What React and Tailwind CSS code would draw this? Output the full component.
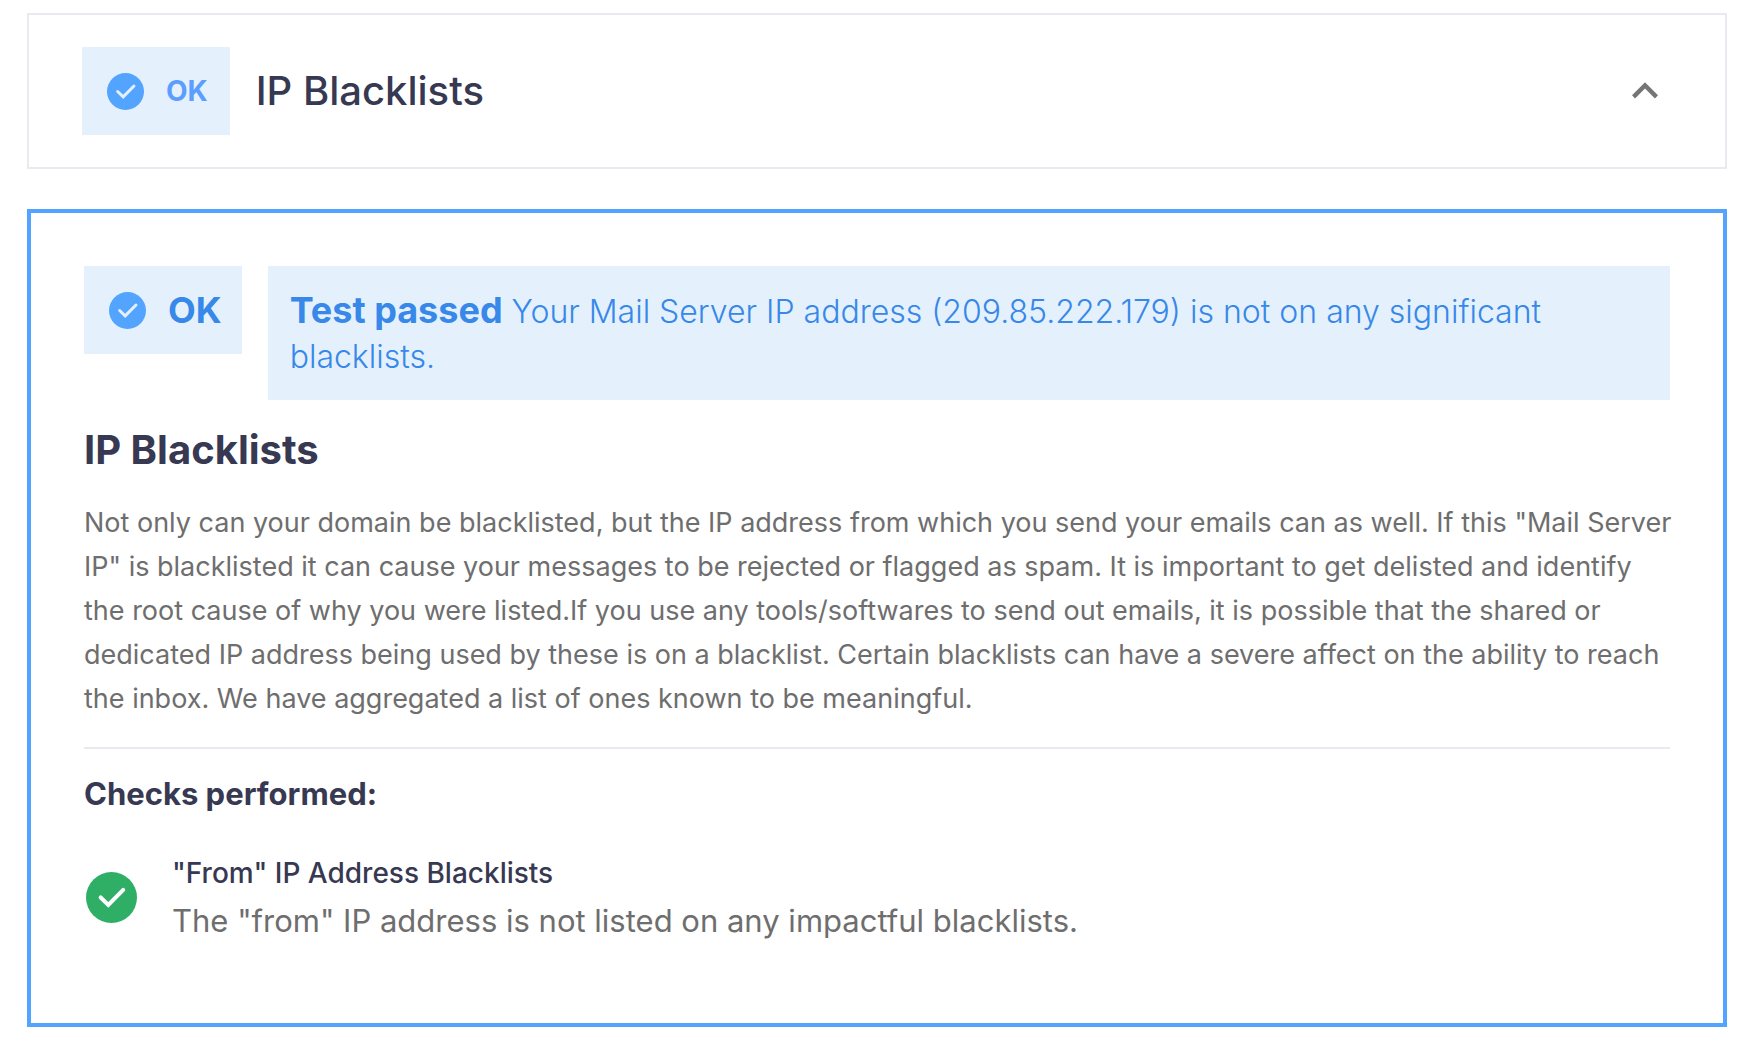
import React, { useState } from "react";

const CheckCircle = ({ className, check }) => (
  <svg viewBox="0 0 24 24" className={className} aria-hidden="true">
    <circle cx="12" cy="12" r="12" fill="currentColor" />
    <path
      d="M6.9 12l3.6 3.5 7-7.1"
      fill="none"
      stroke={check}
      strokeWidth="1.9"
      strokeLinecap="round"
      strokeLinejoin="miter"
    />
  </svg>
);

const checks = [
  {
    title: '"From" IP Address Blacklists',
    text: 'The "from" IP address is not listed on any impactful blacklists.',
  },
];

const App = () => {
  const [open, setOpen] = useState(true);

  return (
    <main className="min-h-screen bg-white pl-[27px] pr-[23px] pt-[13px] pb-4 font-['Inter',sans-serif] [font-optical-sizing:none]">
      {/* Accordion header */}
      <button
        type="button"
        aria-expanded={open}
        onClick={() => setOpen(!open)}
        className="flex w-full cursor-pointer items-center border-2 border-[#e9e9ef] py-8 pl-[53px] pr-[54px] text-left"
      >
        <span className="flex h-[88px] shrink-0 items-center gap-[22px] bg-[#e4f1fd] pl-[25px] pr-[22px] text-[28px] font-bold text-[#5b9eff]">
          <CheckCircle className="size-[37px] text-[#52a4ff]" check="#e4f1fd" />
          OK
        </span>
        <span className="ml-[26px] flex-1 text-[40px] font-medium text-[#373952]">
          IP Blacklists
        </span>
        <svg viewBox="0 0 24 24" className="size-[52px] text-[#757575]" aria-hidden="true">
          <path
            d="M12 8l-6 6 1.41 1.41L12 10.83l4.59 4.58L18 14z"
            fill="currentColor"
          />
        </svg>
      </button>

      {/* Accordion panel */}
      {open && (
        <section className="mt-10 border-4 border-[#52a4ff] px-[53px] pt-[53px] pb-[78px]">
          <div className="flex items-start gap-[26px]">
            <div className="flex h-[88px] shrink-0 items-center gap-[22px] bg-[#e4f1fd] pl-[25px] pr-5 text-[36px] font-bold text-[#3788e8]">
              <CheckCircle className="size-[37px] text-[#52a4ff]" check="#e4f1fd" />
              OK
            </div>
            <p className="flex-1 bg-[#e4f1fd] px-[22px] pt-[23px] pb-[21px] text-[32px] leading-[45px] font-light text-[#3788e8]">
              <strong className="text-[36px] leading-none font-bold">Test passed</strong>{" "}
              Your Mail Server IP address (209.85.222.179) is not on any significant
              blacklists.
            </p>
          </div>

          <h2 className="mt-[26px] text-[40px] leading-[48px] font-bold text-[#373952]">
            IP Blacklists
          </h2>
          <p className="mt-[27px] -mr-1 text-[27px] leading-[44px] text-[#6e6e6e]">
            Not only can your domain be blacklisted, but the IP address from which you
            send your emails can as well. If this "Mail Server IP" is blacklisted it can
            cause your messages to be rejected or flagged as spam. It is important to get
            delisted and identify the root cause of why you were listed.If you use any
            tools/softwares to send out emails, it is possible that the shared or
            dedicated IP address being used by these is on a blacklist. Certain
            blacklists can have a severe affect on the ability to reach the inbox. We have
            aggregated a list of ones known to be meaningful.
          </p>

          <hr className="mt-[26px] border-t-2 border-[#e9e9ef]" />

          <h3 className="mt-[23px] text-[31px] leading-[44px] font-bold text-[#373952]">
            Checks performed:
          </h3>
          <ul className="mt-[33px]">
            {checks.map((c) => (
              <li key={c.title} className="flex items-center gap-[33px]">
                <CheckCircle className="mx-[2px] size-[51px] shrink-0 text-[#2fae66]" check="#ffffff" />
                <div>
                  <h4 className="text-[28px] leading-[48px] font-medium text-[#373952]">
                    {c.title}
                  </h4>
                  <p className="text-[31px] leading-[48px] text-[#6e6e6e]">{c.text}</p>
                </div>
              </li>
            ))}
          </ul>
        </section>
      )}
    </main>
  );
};

export default App;
